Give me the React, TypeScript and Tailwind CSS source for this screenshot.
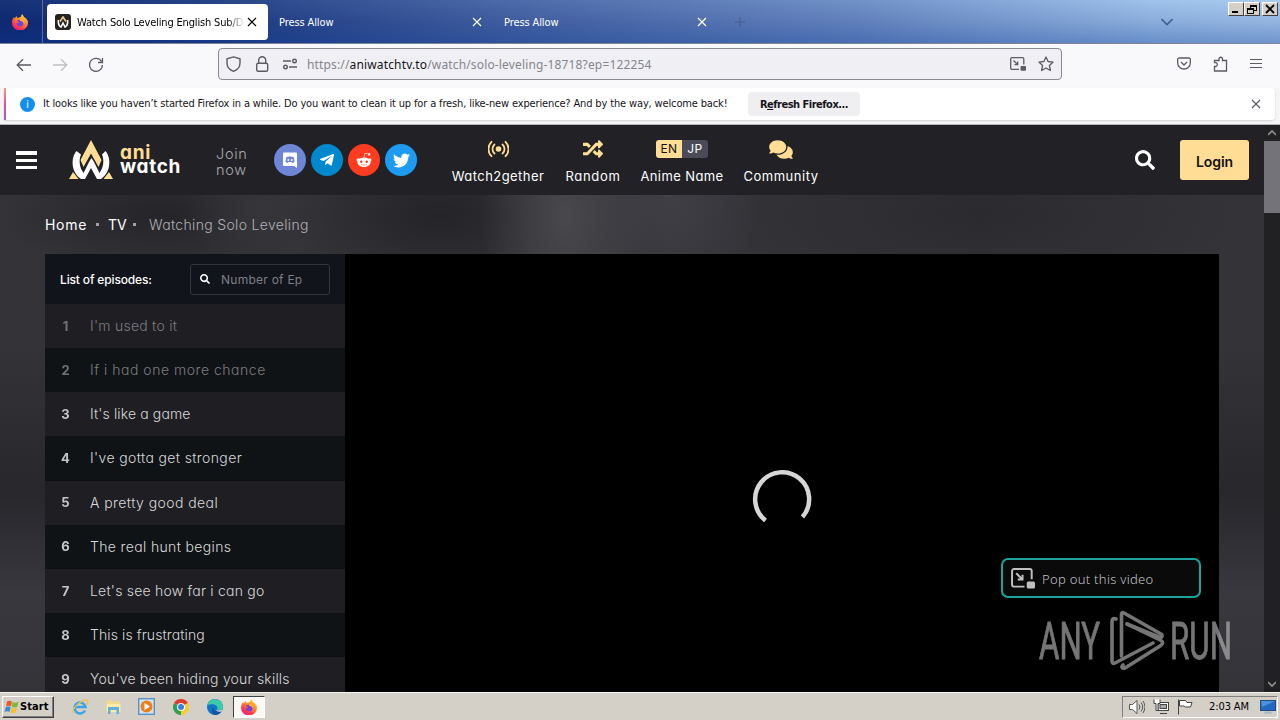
import type { ReactNode } from "react";
import { FaTelegramPlane, FaRedditAlien, FaTwitter, FaRandom, FaComments, FaSearch } from "react-icons/fa";

const UI = "font-['DejaVu_Sans_Condensed','DejaVu_Sans',sans-serif]";

function FirefoxLogo({ className }: { className?: string }) {
  return (
    <svg className={className} viewBox="0 0 16 16">
      <defs>
        <linearGradient id="fx" x1="0.8" y1="0" x2="0.2" y2="1">
          <stop offset="0" stopColor="#ffe045" />
          <stop offset="0.4" stopColor="#ff8a2a" />
          <stop offset="0.75" stopColor="#ff3750" />
          <stop offset="1" stopColor="#e31587" />
        </linearGradient>
      </defs>
      <path d="M10 0c1 1 1.600 2 2 3 2 1 4 3 4 6a8 7.500 0 0 1-16 0c0-3 1-4.500 2-6l.6 1.400L4.500 2l.8 2C7 3.500 8.500 3 9 2.500 9.300 1.500 9.500.8 10 0Z" fill="url(#fx)" />
      <path d="M5 6.500c2-1.500 5-.8 6.300 1.200.9 2-.2 4.600-2.800 4.800-2.700.1-4.300-2-3.800-3.700.7.500 1.800.3 2.400-.4C6.500 8 5.400 7.400 5 6.500Z" fill="#7542d9" />
      <path d="M8 5.500c3 0 4.500 2 4 4.500C11.800 8.200 10.500 7 8 6.800Z" fill="#ffc53a" />
    </svg>
  );
}

function Cross({ className }: { className?: string }) {
  return (
    <svg className={className} viewBox="0 0 10 10" fill="none" stroke="currentColor" strokeWidth="1.2">
      <path d="M1 1l8 8M9 1l-8 8" />
    </svg>
  );
}

function PipIcon({ className }: { className?: string }) {
  return (
    <svg className={className} viewBox="0 0 16 14" fill="none" stroke="currentColor" strokeWidth="1.300">
      <path d="M9 12.400H2A1.300 1.300 0 0 1 .7 11V2A1.300 1.300 0 0 1 2 .7h10.500A1.300 1.300 0 0 1 13.800 2v5.500" />
      <path d="M3.500 3.500l4 4M7.700 4.500v3.200H4.500" />
      <rect x="10.500" y="9" width="5.500" height="4.700" rx="1" fill="currentColor" stroke="none" />
    </svg>
  );
}

function WindowButton({ children }: { children: ReactNode }) {
  return (
    <div className="flex h-[14px] w-[16px] items-center justify-center border border-t-white border-r-[#404040] border-b-[#404040] border-l-white bg-[#d4d0c8] text-black">
      <svg className="h-[10px] w-[12px]" viewBox="0 0 12 10" fill="none" stroke="currentColor" shapeRendering="crispEdges">
        {children}
      </svg>
    </div>
  );
}

function TabBar() {
  return (
    <div className={`flex h-[43px] bg-[linear-gradient(to_bottom,rgba(255,255,255,0.04),rgba(20,30,110,0.12)_50%,rgba(10,50,140,0.35)),linear-gradient(to_right,#0e2a72_0%,#1b3a80_15%,#4565a5_40%,#6b8dc6_67%,#9ac0ea_90%,#a6caf0)] text-[11px] text-white ${UI}`}>
      <div className="flex w-[43px] shrink-0 items-center justify-center border-r border-[#5a6ca3] pr-[2px]">
        <FirefoxLogo className="h-4 w-4" />
      </div>
      <div className="mt-1 ml-[4px] flex h-9 w-[221px] shrink-0 items-center rounded bg-white pl-2 text-black">
        <span className="flex h-4 w-4 shrink-0 items-center justify-center rounded-[3px] bg-[#25221f]">
          <svg className="h-3 w-3" viewBox="0 0 12 12" fill="none" strokeWidth="1.600">
            <path d="M3 5.500L6 1l3 4.500" stroke="#e9cf91" />
            <path d="M1.500 4c-.5 3 .6 6 2.500 7l2-4 2 4c2-1 3-4 2.500-7" stroke="#fff" />
          </svg>
        </span>
        <span className="mt-[2px] ml-[6px] w-[167px] overflow-hidden whitespace-nowrap bg-[linear-gradient(to_right,#000_150px,transparent_168px)] bg-clip-text tracking-[-0.16px] text-transparent">
          Watch Solo Leveling English Sub/Dub
        </span>
        <Cross className="ml-[3px] h-[10px] w-[10px] shrink-0" />
      </div>
      <div className="flex w-[225px] shrink-0 items-center pr-[11px] pl-[11px] pt-[1px]">
        <span className="pt-[3px] tracking-[-0.1px]">Press Allow</span>
        <Cross className="ml-auto h-[10px] w-[10px]" />
      </div>
      <div className="flex w-[225px] shrink-0 items-center pr-[11px] pl-[11px] pt-[1px]">
        <span className="pt-[3px] tracking-[-0.1px]">Press Allow</span>
        <Cross className="ml-auto h-[10px] w-[10px]" />
      </div>
      <svg className="mt-[17px] ml-[17px] h-[10px] w-[10px] text-[#475b8b]" viewBox="0 0 10 10" stroke="currentColor">
        <path d="M5 0v10M0 5h10" />
      </svg>
      <svg className="mt-[18px] ml-auto h-[8px] w-[12px] text-[#3f5f92]" viewBox="0 0 12 8" fill="none" stroke="currentColor" strokeWidth="1.600">
        <path d="M.5 1L6 6.500 11.500 1" />
      </svg>
      <div className="mt-[2px] mr-[2px] ml-[55px] flex">
        <WindowButton><path d="M2 8h6" strokeWidth="2" /></WindowButton>
        <WindowButton><path d="M4.500 4V1.500h6v5H8M1.500 4.500h6v5h-6zM4 2h7M1 5h7" /></WindowButton>
        <div className="ml-[2px]"><WindowButton><path d="M2 1l8 8M10 1L2 9" strokeWidth="1.800" shapeRendering="auto" /></WindowButton></div>
      </div>
    </div>
  );
}

function NavBar() {
  return (
    <div className="flex h-[45px] items-start border-t border-[#7f8497] bg-[#f9f9fb] text-[#5b5b66]">
      <svg className="mt-[14px] ml-[16px] h-4 w-4" viewBox="0 0 16 16" fill="none" stroke="currentColor" strokeWidth="1.300">
        <path d="M15 7H1.500M7 1.200L1.200 7 7 12.800" />
      </svg>
      <svg className="mt-[14px] ml-[20px] h-4 w-4 text-[#bebec4]" viewBox="0 0 16 16" fill="none" stroke="currentColor" strokeWidth="1.300">
        <path d="M1 7h13.500M9 1.200L14.800 7 9 12.800" />
      </svg>
      <svg className="mt-[13px] ml-[20px] h-4 w-4" viewBox="0 0 16 16" fill="none" stroke="currentColor" strokeWidth="1.300">
        <path d="M13.500 4.500A6.500 6.500 0 1 0 14.400 8M14.500 1v4.500H10" />
      </svg>
      <div className="mt-[4px] ml-[114px] flex h-8 w-[844px] items-center rounded border border-[#8b8b93] bg-[#f0f0f4] pr-[7px] pl-[7px]">
        <svg className="h-4 w-4" viewBox="0 0 16 16" fill="none" stroke="currentColor" strokeWidth="1.400">
          <path d="M7.500 .9L14 2.800V7c0 4-2.800 7-6.500 8.300C3.800 14 1 11 1 7V2.800Z" />
        </svg>
        <svg className="ml-[13px] h-4 w-4" viewBox="0 0 16 16" fill="none" stroke="currentColor" strokeWidth="1.400">
          <rect x="1.700" y="7.200" width="11" height="8" rx="1.500" />
          <path d="M3.700 7V4.200a3.500 3.500 0 0 1 7 0V7" />
        </svg>
        <svg className="ml-[11px] h-4 w-4" viewBox="0 0 16 16" fill="none" stroke="currentColor" strokeWidth="1.400">
          <path d="M1 5h8M7 11h8" />
          <circle cx="12.500" cy="5" r="1.800" />
          <circle cx="3.500" cy="11" r="1.800" />
        </svg>
        <span className="mt-[2px] ml-[9px] text-[12px] tracking-[0.15px] whitespace-nowrap text-[#85858d] font-['Noto_Sans',sans-serif]">
          https://<span className="text-[#15141a]">aniwatchtv.to</span>/watch/solo-leveling-18718?ep=122254
        </span>
        <PipIcon className="ml-auto h-[14px] w-4" />
        <svg className="ml-[12px] h-4 w-4" viewBox="0 0 16 16" fill="none" stroke="currentColor" strokeWidth="1.300" strokeLinejoin="round">
          <path d="M8 1l2.100 4.500 5 .6-3.700 3.400 1 5L8 12l-4.400 2.500 1-5L.9 6.100l5-.6Z" />
        </svg>
      </div>
      <svg className="mt-[13px] ml-[115px] h-[14px] w-[14px]" viewBox="0 0 14 14" fill="none" stroke="currentColor" strokeWidth="1.300">
        <path d="M2 1h10a1.300 1.300 0 0 1 1.300 1.300V6a6.300 6 0 0 1-12.600 0V2.300A1.300 1.300 0 0 1 2 1ZM4 5l3 3 3-3" />
      </svg>
      <svg className="mt-[12px] ml-[22px] h-4 w-4" viewBox="0 0 16 16" fill="none" stroke="currentColor" strokeWidth="1.300">
        <path d="M1.500 15v-4.500H3a2 2 0 0 0 0-3.800H1.500V4.500H6V3a1.700 1.700 0 0 1 3.500 0v1.500h4V15Z" />
      </svg>
      <svg className="mt-[14px] ml-[21px] h-3 w-3" viewBox="0 0 12 12" stroke="currentColor" strokeWidth="1.200">
        <path d="M0 1.500h12M0 5.500h12M0 9.500h12" />
      </svg>
    </div>
  );
}

function Notice() {
  return (
    <div className={`h-[37px] border-b border-[#b5b5b9] bg-[#f5f5f7] text-[11px] text-[#15141a] ${UI}`}>
      <div className="ml-1 flex h-8 w-[1271px] items-center rounded-r bg-white shadow-[0_1px_2px_rgba(0,0,0,0.15)]">
        <div className="h-8 w-[2px] bg-[linear-gradient(to_bottom,#f0a080,#e0509a_50%,#a060d0)]" />
        <span className="ml-[14px] flex h-[15px] w-[15px] items-center justify-center rounded-full bg-[#1590ea] text-[10px] text-white">i</span>
        <span className="ml-[8px] w-[705px] whitespace-nowrap tracking-[-0.145px]">
          It looks like you haven’t started Firefox in a while. Do you want to clean it up for a fresh, like-new experience? And by the way, welcome back!
        </span>
        <span className="flex h-[24px] w-[112px] items-center justify-center rounded bg-[#efeff1] pt-[2px] text-[11px] font-bold tracking-[-0.5px] whitespace-nowrap">
          R<u>e</u>fresh Firefox...
        </span>
        <Cross className="mr-[14px] ml-auto h-[10px] w-[10px] text-[#5b5b66]" />
      </div>
    </div>
  );
}

function NavItem({ label, className, children }: { label: string; className: string; children: ReactNode }) {
  return (
    <div className={`flex flex-col items-center ${className}`}>
      <div className="flex h-[20px] items-center text-[#ffdd95]">{children}</div>
      <span className="mt-[7px] text-[13px] leading-[20px] whitespace-nowrap">{label}</span>
    </div>
  );
}

function SiteHeader() {
  return (
    <header className="flex h-[70px] shrink-0 items-center bg-[#222226] text-white">
      <div className="ml-[16px] flex w-[21px] flex-col gap-[4px]">
        <div className="h-[4px] bg-white" />
        <div className="h-[3px] bg-white" />
        <div className="h-[3px] bg-white" />
      </div>
      <svg className="ml-[31px] h-[42px] w-[46px]" viewBox="0 0 46 42">
        <path d="M23 1L12.500 21l3 7L23 14.500l7.500 13.500 3-7Z" fill="#ffdd95" />
        <path d="M8.500 12C3 18 2.500 33 13 40l4 0 6-11 6 11 4 0c10.500-7 10-22 4.500-28l-3.500 3.500c2.500 6 1.500 13-2.500 18.500l-5.500-11-2.500-4-2.500 4-5.500 11c-4-5.500-5-12.500-2.500-18.500Z" fill="#fff" />
        <path d="M5 33l5.500 7H1ZM41 33l4 7h-9.500Z" fill="#ffdd95" />
      </svg>
      <div className="-mt-px ml-[6px] flex w-[62px] flex-col text-[19px] leading-[14px] font-bold tracking-[0.7px]">
        <span className="text-[#ffdd95]">ani</span>
        <span>watch</span>
      </div>
      <div className="mt-[3px] ml-[34px] w-[38px] text-[14.500px] leading-[16px] font-light tracking-[0.7px] text-[#a9a9ad]">Join now</div>
      <div className="ml-[20px] flex gap-[5px]">
        <span className="flex h-8 w-8 items-center justify-center rounded-full bg-[#6f85d5]">
          <svg className="h-4 w-4" viewBox="0 0 16 16">
            <path d="M1 1.500A1 1 0 0 1 2 .5h12a1 1 0 0 1 1 1V16l-3-2H2a1 1 0 0 1-1-1Z" fill="#fff" />
            <path d="M3.500 10c0-2.500.6-4 1.200-5L7 4.500h2l2.300.5c.6 1 1.200 2.500 1.200 5l-2.300 1-.7-1h-3l-.7 1Z" fill="#6f85d5" />
            <circle cx="6.300" cy="8" r="1" fill="#fff" />
            <circle cx="9.700" cy="8" r="1" fill="#fff" />
          </svg>
        </span>
        <span className="flex h-8 w-8 items-center justify-center rounded-full bg-[#0088cc]"><FaTelegramPlane className="h-4 w-4" /></span>
        <span className="flex h-8 w-8 items-center justify-center rounded-full bg-[#ff3c1f]"><FaRedditAlien className="h-4 w-4" /></span>
        <span className="flex h-8 w-8 items-center justify-center rounded-full bg-[#1d9bf0]"><FaTwitter className="h-[17px] w-[17px]" /></span>
      </div>
      <nav className="mt-[5px] ml-[34px] flex">
        <NavItem label="Watch2gether" className="w-[94px] tracking-[0.45px]">
          <svg className="h-[18px] w-[21px]" viewBox="0 0 21 18" fill="none" stroke="currentColor" strokeWidth="1.800" strokeLinecap="round">
            <circle cx="10.500" cy="9" r="2.800" fill="currentColor" stroke="none" />
            <path d="M6.500 4.500a6 6 0 0 0 0 9M14.500 4.500a6 6 0 0 1 0 9M3.500 1.800a10 10 0 0 0 0 14.400M17.500 1.800a10 10 0 0 1 0 14.400" />
          </svg>
        </NavItem>
        <NavItem label="Random" className="ml-[20px] w-[56px] tracking-[0.7px]"><FaRandom className="h-5 w-5" /></NavItem>
        <NavItem label="Anime Name" className="ml-[19px] w-[84px] tracking-[0.4px]">
          <span className="flex h-[18px] w-[52px] overflow-hidden rounded-[3px] text-[12px] leading-[18px]">
            <span className="w-[26px] bg-[#ffdd95] text-center text-[#111]">EN</span>
            <span className="w-[26px] bg-[#4a4b56] text-center text-white">JP</span>
          </span>
        </NavItem>
        <NavItem label="Community" className="ml-[19px] w-[76px] tracking-[0.5px]"><FaComments className="h-[21px] w-[24px]" /></NavItem>
      </nav>
      <FaSearch className="ml-auto h-[20px] w-[20px]" />
      <div className="mr-[15px] ml-[25px] flex h-10 w-[69px] items-center justify-center rounded-[3px] bg-[#ffdd95] pt-[2px] text-[14px] font-semibold tracking-[-0.1px] text-[#111]">Login</div>
    </header>
  );
}

const EPISODES = [
  { title: "I'm used to it", seen: true, cls: "tracking-[0.25px]" },
  { title: "If i had one more chance", seen: true, cls: "tracking-[0.52px]" },
  { title: "It's like a game", seen: false, cls: "tracking-[0.12px]" },
  { title: "I've gotta get stronger", seen: false, cls: "tracking-[0.38px]" },
  { title: "A pretty good deal", seen: false, cls: "tracking-[0.43px]" },
  { title: "The real hunt begins", seen: false, cls: "tracking-[0.35px]" },
  { title: "Let's see how far i can go", seen: false, cls: "tracking-[0.22px]" },
  { title: "This is frustrating", seen: false, cls: "tracking-[0.1px]" },
  { title: "You've been hiding your skills", seen: false, cls: "tracking-[0.2px]" },
];

function EpisodeList() {
  return (
    <div className="w-[300px] shrink-0">
      <div className="flex h-[50px] items-center bg-[#11141b] pl-[15px] text-white">
        <span className="w-[130px] pt-[2px] text-[12px] font-medium tracking-[-0.15px]">List of episodes:</span>
        <div className="flex h-[31px] w-[140px] items-center rounded-[3px] border border-[#34363e] pl-[9px]">
          <FaSearch className="h-[10px] w-[10px]" />
          <span className="ml-[11px] pt-[2px] text-[12px] tracking-[0.25px] text-[#7d7f85]">Number of Ep</span>
        </div>
      </div>
      {EPISODES.map((e, i) => (
        <div key={e.title} className={`flex h-[44.125px] items-center ${i % 2 ? "bg-[#101315]" : "bg-[#1f1f23]"} ${e.seen ? "text-[#7c7c80]" : "text-[#d8d8da]"}`}>
          <span className="mt-px ml-[11px] w-[19px] text-center text-[13px] font-bold opacity-90">{i + 1}</span>
          <span className={`mb-px ml-[15px] text-[14px] font-light whitespace-nowrap ${e.cls}`}>{e.title}</span>
        </div>
      ))}
    </div>
  );
}

function Watermark() {
  return (
    <svg className="absolute top-[484px] left-[1036px] h-[64px] w-[200px] opacity-60" viewBox="0 0 200 64" fill="none" stroke="#c4c4c4" strokeWidth="3.600" strokeLinejoin="round">
      <g fill="#c4c4c4" strokeWidth="0.900" className="font-['Roboto',sans-serif]" fontSize="52">
        <text x="3" y="50" textLength="61" lengthAdjust="spacingAndGlyphs">ANY</text>
        <text x="134" y="50" textLength="62" lengthAdjust="spacingAndGlyphs">RUN</text>
      </g>
      <path d="M85.500 47V5c0-1.500 1-2 2.500-1L125 25c2 1.500 1 4-1 3.300L91 15" strokeLinecap="round" />
      <path d="M80 10c-3-1-4 0-4 3v39c0 2 1 3 3 2l38-20M91 15l33 16c4 2 3 4 0 6L89 59c-3 1-4-1-2-3" strokeLinecap="round" />
    </svg>
  );
}

function Page() {
  return (
    <div className="relative flex h-[567px] overflow-hidden font-['Inter',sans-serif] [font-feature-settings:'cv11']">
      <div className="flex w-[1264px] flex-col bg-[#2d2c31]">
        <SiteHeader />
        <main className="flex min-h-0 flex-1 flex-col bg-[radial-gradient(ellipse_85px_150px_at_565px_20px,#49484d,transparent),radial-gradient(ellipse_90px_130px_at_670px_0px,#403f45,transparent),radial-gradient(ellipse_150px_80px_at_440px_20px,#242328,transparent),radial-gradient(ellipse_80px_70px_at_265px_15px,#363539,transparent),radial-gradient(ellipse_160px_60px_at_160px_20px,#252429,transparent),radial-gradient(ellipse_260px_90px_at_980px_20px,#2b2a2f,transparent),linear-gradient(to_bottom,#343338_0%,#343338_30%,#28272c_60%,#39383e_80%,#343338_100%)]">
          <div className="flex h-[59px] shrink-0 items-center pl-[45px] text-[14px] font-light whitespace-nowrap text-white">
            <span className="mb-px w-[51px] font-normal tracking-[0.7px]">Home</span>
            <span className="h-[3px] w-[3px] bg-[#a0a0a4]" />
            <span className="mb-px ml-[9px] w-[25px] font-normal">TV</span>
            <span className="h-[3px] w-[3px] bg-[#a0a0a4]" />
            <span className="mb-px ml-[13px] tracking-[0.33px] text-[#b0b0b4]">Watching Solo Leveling</span>
          </div>
          <div className="ml-[45px] flex w-[1174px] flex-1 bg-black">
            <EpisodeList />
            <div className="flex flex-1 justify-center">
              <svg className="mt-[216px] h-[62px] w-[62px]" viewBox="0 0 62 62" fill="none" stroke="#d6d6d6" strokeWidth="4.500">
                <path d="M14.500 50.500A27 27 0 1 1 51.500 47" />
              </svg>
            </div>
          </div>
        </main>
      </div>
      <div className="flex w-4 flex-col items-center bg-[#212124] text-[#8b8b90]">
        <svg className="my-[4px] h-2 w-2" viewBox="0 0 8 8" fill="none" stroke="currentColor" strokeWidth="1.700"><path d="M0 6l4-4 4 4" /></svg>
        <div className="h-[72px] w-4 bg-[#747379]" />
        <svg className="mt-auto mb-[4px] h-2 w-2" viewBox="0 0 8 8" fill="none" stroke="currentColor" strokeWidth="1.700"><path d="M0 2l4 4 4-4" /></svg>
      </div>
      <div className="absolute top-[433px] left-[1001px] flex h-10 w-[200px] items-center rounded-[7px] border-2 border-[#1ba39c] bg-[#0a0a0b] pl-[8px] text-[#c0c0c2]">
        <PipIcon className="h-[21px] w-[24px]" />
        <span className="mt-[3px] ml-[7px] font-['Noto_Sans',sans-serif] text-[13px] font-light tracking-[0.3px]">Pop out this video</span>
      </div>
      <Watermark />
    </div>
  );
}

function Taskbar() {
  return (
    <div className={`flex h-7 items-center border-t border-[#f5f3ef] bg-[#d4d0c8] text-[11px] text-black ${UI}`}>
      <div className="ml-[2px] flex h-[22px] w-[52px] items-center border border-t-white border-r-[#404040] border-b-[#404040] border-l-white pl-[1px] shadow-[inset_-1px_-1px_#808080]">
        <svg className="h-4 w-4 shrink-0" viewBox="0 0 16 16">
          <path d="M3 2.500c2-1 3.300-.8 5 .2L7 7.500C5.500 6.500 4 6.400 2 7.200Z" fill="#e8592b" />
          <path d="M8.700 3c2 1 3.600 1 5.800 0l-1.300 4.700c-2 1-3.600.9-5.300 0Z" fill="#7ab83a" />
          <path d="M1.700 8.200c2-1 3.500-.7 5 .2l-1.200 4.700c-1.500-1-3-1-5-.2Z" fill="#3a8ad8" />
          <path d="M7.500 8.800c2 1 3.500 1 5.500 0l-1.300 4.700c-2 1-3.600.8-5.300-.1Z" fill="#f6c12f" />
        </svg>
        <span className="pt-[2px] text-[11px] font-bold tracking-[0.1px]">Start</span>
      </div>
      <svg className="ml-[17px] h-[18px] w-[18px]" viewBox="0 0 18 18" fill="none">
        <path d="M14 12.500A5.500 5.500 0 1 1 14.500 9H5" stroke="#3ba4e6" strokeWidth="2.600" />
        <path d="M2 15C0 12 9 2 16 2c2 1 0 4-1 5" stroke="#edc24b" strokeWidth="1.400" />
      </svg>
      <svg className="ml-[16px] h-[17px] w-[17px]" viewBox="0 0 17 17">
        <path d="M1 3l5-1 1 1.500h8V13H1Z" fill="#efd98a" />
        <path d="M2 6h13.500v8H2Z" fill="#f8e9ad" />
        <path d="M3 16V9h11v7h-2.500v-4h-6v4Z" fill="#63b0dc" />
      </svg>
      <svg className="ml-[16px] h-[17px] w-[17px]" viewBox="0 0 17 17">
        <rect x=".7" y=".7" width="15.600" height="15.600" fill="#cfe4f5" stroke="#5a91c6" strokeWidth="1.400" />
        <circle cx="8.500" cy="8.500" r="6" fill="#ef8019" />
        <path d="M6.500 5l5.500 3.500L6.500 12Z" fill="#fff" />
      </svg>
      <svg className="ml-[18px] h-[16px] w-[16px]" viewBox="0 0 16 16">
        <path d="M8 8L1.070 4A8 8 0 0 1 14.930 4Z" fill="#e13b2e" />
        <path d="M8 8V16A8 8 0 0 1 1.070 4Z" fill="#2fa14e" />
        <path d="M8 8L14.930 4A8 8 0 0 1 8 16Z" fill="#f9cd2d" />
        <circle cx="8" cy="8" r="4" fill="#fff" />
        <circle cx="8" cy="8" r="3" fill="#3a7ce8" />
      </svg>
      <svg className="ml-[18px] h-[16px] w-[16px]" viewBox="0 0 16 16">
        <circle cx="8" cy="8" r="8" fill="#1174cc" />
        <path d="M.3 6A8 8 0 0 1 16 8c0 3-4 4-6 2.500C12 7 7 3.500.3 6Z" fill="#3ccba8" />
        <path d="M7 8c-1 3 2 5.500 7.500 4.500A8 8 0 0 1 8 16C4 15 4 9 7 8Z" fill="#1456a0" />
        <path d="M9 10.800c2 1.200 5 .5 6.500-.8l-1 2.500c-3 .8-5 0-5.500-1.700Z" fill="#d4d0c8" />
      </svg>
      <div className="ml-[10px] flex h-[22px] w-8 items-center justify-center border border-t-[#404040] border-r-white border-b-white border-l-[#404040] bg-[#faf9f8]">
        <FirefoxLogo className="h-[16px] w-[16px]" />
      </div>
      <div className="mr-[2px] ml-auto flex h-[22px] w-[156px] items-center border border-t-[#808080] border-r-white border-b-white border-l-[#808080] pl-[6px]">
        <svg className="h-4 w-4" viewBox="0 0 16 16" fill="#fff" stroke="#555" strokeWidth="1">
          <path d="M.5 5.500h3L8 1.500v13l-4.500-4h-3Z" />
          <path d="M10 5.500q2 2.500 0 5M12 3.500q3.500 4.500 0 9M14 2q4 6 0 12" fill="none" />
        </svg>
        <svg className="ml-[8px] h-4 w-4" viewBox="0 0 16 16" fill="#fff" stroke="#444" strokeWidth="1">
          <rect x="5" y="3.500" width="10.500" height="8" />
          <rect x="7" y="5.500" width="6.500" height="4" fill="#a8a8a8" />
          <path d="M1 .5v4h2v7h2v-7h2v-4M7 14.500h7" />
        </svg>
        <svg className="ml-[8px] h-4 w-4" viewBox="0 0 16 16" fill="#fff" stroke="#444" strokeWidth="1">
          <path d="M2.500 1.500h6l1.500 2h5l-1.500 4.500h-5L7 7H2.500ZM1.500 .5v15" />
        </svg>
        <span className="ml-[16px] pt-[2px] tracking-[-0.1px] whitespace-nowrap">2:03 AM</span>
        <svg className="ml-auto mr-[1px] h-[14px] w-[16px]" viewBox="0 0 16 14">
          <rect x=".5" y=".5" width="15" height="10" fill="#2368c0" stroke="#274a7c" />
          <path d="M1 1h14L2 7Z" fill="#4b93df" />
          <path d="M4 13.500l1-2h6l1 2Z" fill="#9db7d0" />
        </svg>
      </div>
    </div>
  );
}

export default function App() {
  return (
    <div className="flex h-[720px] w-[1280px] flex-col overflow-hidden">
      <TabBar />
      <NavBar />
      <Notice />
      <Page />
      <Taskbar />
    </div>
  );
}
